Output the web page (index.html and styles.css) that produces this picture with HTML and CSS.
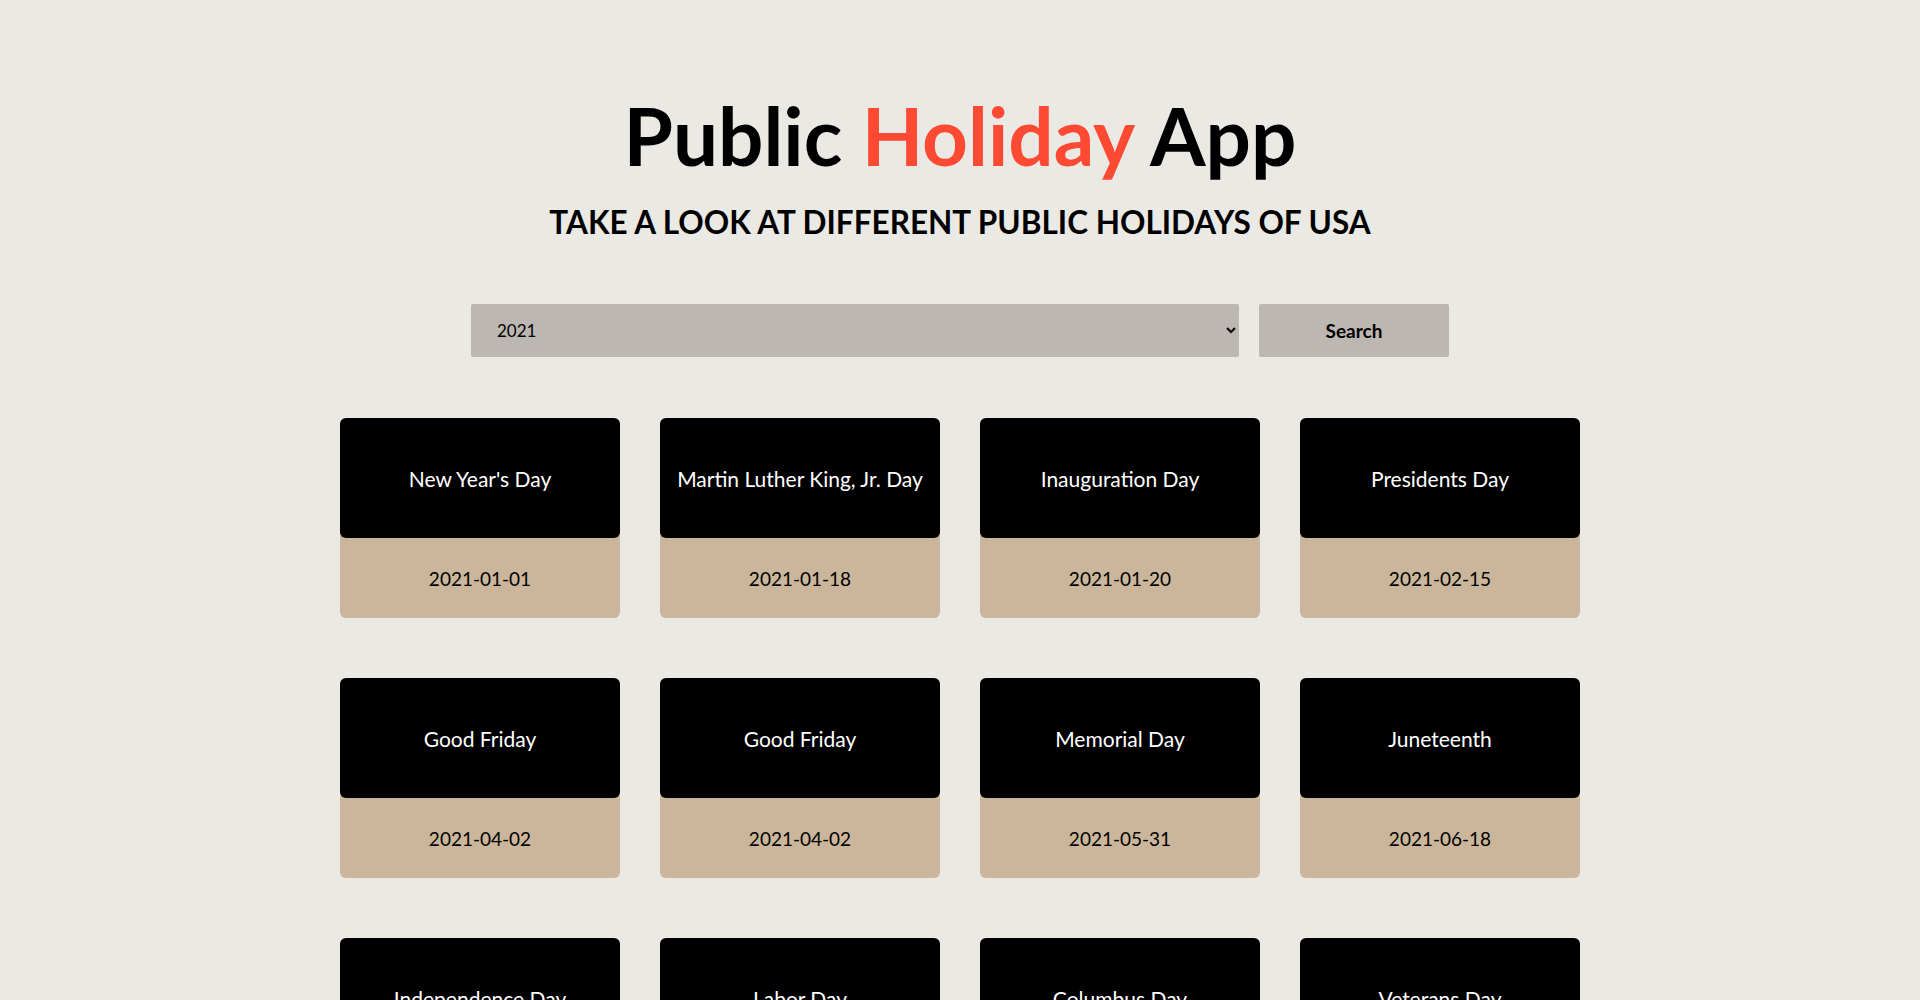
FILE: index.html
```html
<!DOCTYPE html>
<html lang="en">
<head>
    <meta charset="UTF-8">
    <meta name="viewport" content="width=device-width, initial-scale=1.0">
    <title>Public Holiday App</title>
    <link rel="stylesheet" href="styles.css">
</head>
<body>
    <header class="header">
        <h1 class="title">Public <span class="accent">Holiday</span> App</h1>
        <h2 class="subtitle">TAKE A LOOK AT DIFFERENT PUBLIC HOLIDAYS OF USA</h2>
    </header>

    <form class="search">
        <select class="year-select">
            <option>2020</option>
            <option selected>2021</option>
            <option>2022</option>
        </select>
        <button type="button" class="search-btn">Search</button>
    </form>

    <div class="holidays">
        <div class="card"><div class="card-name">New Year's Day</div><div class="card-date">2021-01-01</div></div>
        <div class="card"><div class="card-name">Martin Luther King, Jr. Day</div><div class="card-date">2021-01-18</div></div>
        <div class="card"><div class="card-name">Inauguration Day</div><div class="card-date">2021-01-20</div></div>
        <div class="card"><div class="card-name">Presidents Day</div><div class="card-date">2021-02-15</div></div>

        <div class="card"><div class="card-name">Good Friday</div><div class="card-date">2021-04-02</div></div>
        <div class="card"><div class="card-name">Good Friday</div><div class="card-date">2021-04-02</div></div>
        <div class="card"><div class="card-name">Memorial Day</div><div class="card-date">2021-05-31</div></div>
        <div class="card"><div class="card-name">Juneteenth</div><div class="card-date">2021-06-18</div></div>

        <div class="card"><div class="card-name">Independence Day</div><div class="card-date">2021-07-05</div></div>
        <div class="card"><div class="card-name">Labor Day</div><div class="card-date">2021-09-06</div></div>
        <div class="card"><div class="card-name">Columbus Day</div><div class="card-date">2021-10-11</div></div>
        <div class="card"><div class="card-name">Veterans Day</div><div class="card-date">2021-11-11</div></div>

        <div class="card"><div class="card-name">Thanksgiving Day</div><div class="card-date">2021-11-25</div></div>
        <div class="card"><div class="card-name">Christmas Day</div><div class="card-date">2021-12-24</div></div>
    </div>
</body>
</html>
```

FILE: styles.css
```css
body {
    margin: 0;
    background-color: #ebe9e4;
    font-family: Lato, "Open Sans", sans-serif;
    color: #000;
}

.header {
    text-align: center;
    padding-top: 90px;
}

.title {
    margin: 0;
    font-size: 80px;
    font-weight: 700;
    line-height: 90px;
}

.accent {
    color: #ff4a33;
}

.subtitle {
    margin: 22px 0 0;
    font-size: 31.5px;
    font-weight: 700;
    line-height: 40px;
}

.search {
    display: flex;
    justify-content: center;
    gap: 20px;
    margin-top: 62px;
}

.year-select {
    width: 768px;
    height: 53px;
    padding: 0 22px;
    font-family: Lato, sans-serif;
    font-size: 17px;
    background-color: #bcb7b0;
    border: none;
    border-radius: 2px;
    color: #000;
}

.search-btn {
    width: 190px;
    height: 53px;
    font-family: Lato, sans-serif;
    font-size: 19px;
    font-weight: 700;
    background-color: #bcb7b0;
    border: none;
    border-radius: 2px;
    color: #000;
    cursor: pointer;
}

.holidays {
    display: grid;
    grid-template-columns: repeat(4, 280px);
    justify-content: center;
    column-gap: 40px;
    row-gap: 60px;
    margin-top: 61px;
    padding-bottom: 60px;
}

.card {
    height: 200px;
    background-color: #cbb59b;
    border-radius: 6px;
    display: flex;
    flex-direction: column;
}

.card-name {
    height: 120px;
    display: flex;
    align-items: center;
    justify-content: center;
    background-color: #000;
    color: #fff;
    border-radius: 6px;
    font-size: 21px;
}

.card-date {
    flex: 1;
    display: flex;
    align-items: center;
    justify-content: center;
    font-size: 19px;
}
```
